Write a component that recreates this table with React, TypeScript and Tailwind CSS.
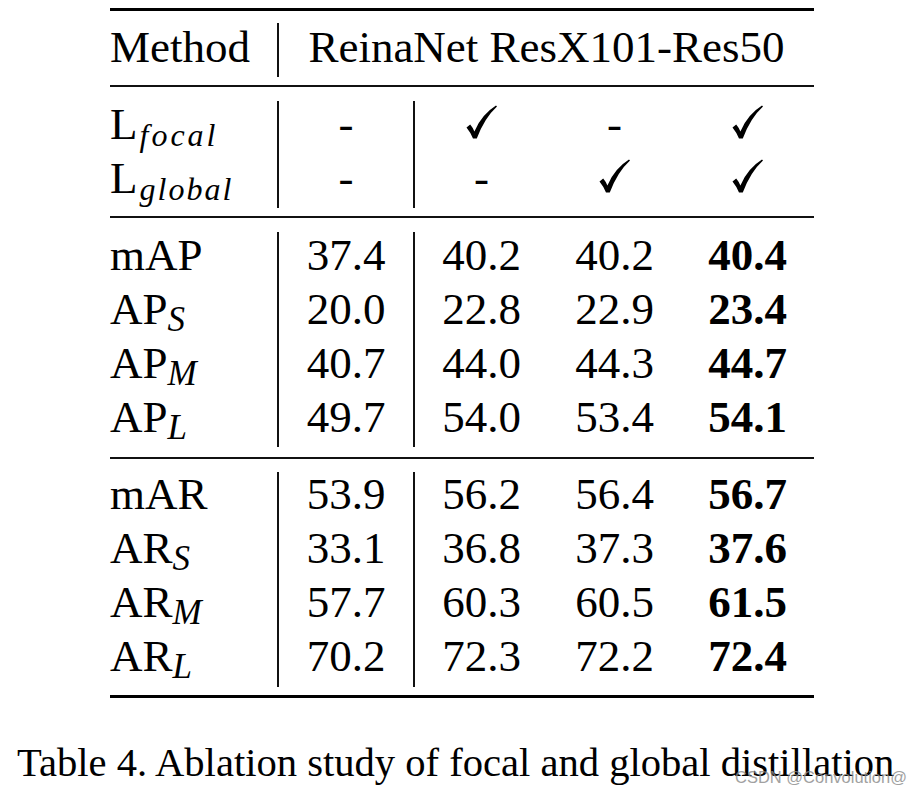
import React from 'react';

type Cell = React.ReactNode;

function Check() {
  return (
    <svg width="31" height="34" viewBox="0 0 31 34" className="inline-block align-baseline">
      <path
        d="M0.5 22.5 L4.2 19.6 Q6.6 22.4 8.4 26.4 Q15.5 9.5 30 0.5 L31 1.6 Q18.5 13 10.8 33.6 L7 33.6 Q4.4 27.2 0.5 22.5 Z"
        fill="#000"
      />
    </svg>
  );
}

function Sub({ children, className = '' }: { children: React.ReactNode; className?: string }) {
  return <span className={`relative top-[7px] italic ${className}`}>{children}</span>;
}

function Column({ cells, className, cellClass = 'text-center' }: { cells: Cell[]; className: string; cellClass?: string }) {
  return (
    <div className={className}>
      {cells.map((c, i) => (
        <div key={i} className={`h-[54px] leading-[54px] whitespace-nowrap ${cellClass}`}>
          {c}
        </div>
      ))}
    </div>
  );
}

interface SectionProps {
  labels: Cell[];
  cols: Cell[][];
  pad: string;
  bar: string;
  boldLast?: boolean;
}

function Section({ labels, cols, pad, bar, boldLast }: SectionProps) {
  return (
    <div className="flex">
      <Column cells={labels} className={`w-[167px] ${pad}`} cellClass="text-left" />
      <div className={`w-[2px] bg-[#111] ${bar}`} />
      <Column cells={cols[0]} className={`w-[134px] ${pad}`} />
      <div className={`w-[2px] bg-[#111] ${bar}`} />
      <Column cells={cols[1]} className={`w-[133px] ${pad}`} />
      <Column cells={cols[2]} className={`w-[133px] ${pad}`} />
      <Column cells={cols[3]} className={`w-[133px] ${pad}`} cellClass={boldLast ? 'text-center font-bold' : 'text-center'} />
    </div>
  );
}

const lossLabels: Cell[] = [
  <>L<Sub className="ml-[2px] text-[32px] tracking-[3px]">focal</Sub></>,
  <>L<Sub className="ml-[2px] text-[32px] tracking-[2px]">global</Sub></>,
];
const lossCols: Cell[][] = [
  ['-', '-'],
  [<Check />, '-'],
  ['-', <Check />],
  [<Check />, <Check />],
];

const apLabels: Cell[] = [
  'mAP',
  <>AP<Sub className="text-[35px]">S</Sub></>,
  <>AP<Sub className="text-[35px]">M</Sub></>,
  <>AP<Sub className="text-[35px]">L</Sub></>,
];
const apCols: Cell[][] = [
  ['37.4', '20.0', '40.7', '49.7'],
  ['40.2', '22.8', '44.0', '54.0'],
  ['40.2', '22.9', '44.3', '53.4'],
  ['40.4', '23.4', '44.7', '54.1'],
];

const arLabels: Cell[] = [
  'mAR',
  <>AR<Sub className="text-[35px]">S</Sub></>,
  <>AR<Sub className="text-[35px]">M</Sub></>,
  <>AR<Sub className="text-[35px]">L</Sub></>,
];
const arCols: Cell[][] = [
  ['53.9', '33.1', '57.7', '70.2'],
  ['56.2', '36.8', '60.3', '72.3'],
  ['56.4', '37.3', '60.5', '72.2'],
  ['56.7', '37.6', '61.5', '72.4'],
];

export default function App() {
  return (
    <div className="relative w-[923px] h-[793px] overflow-hidden bg-white text-black font-['Liberation_Serif',serif] text-[45px]">
      <div className="ml-[110px] w-[704px] pt-[8px]">
        {/* top rule */}
        <div className="h-[3px] bg-black" />

        {/* header */}
        <div className="flex">
          <div className="w-[167px] pt-[9px] pb-[11px] h-[74px]">
            <div className="h-[54px] leading-[54px]">Method</div>
          </div>
          <div className="w-[2px] bg-[#111] mt-[12px] mb-[8px]" />
          <div className="flex-1 pt-[9px] pb-[11px]">
            <div className="h-[54px] leading-[54px] text-center whitespace-nowrap">ReinaNet ResX101-Res50</div>
          </div>
        </div>
        <div className="h-[2px] bg-[#111]" />

        <Section labels={lossLabels} cols={lossCols} pad="pt-[10px] pb-[11px]" bar="mt-[14px] mb-[8px]" />
        <div className="h-[2px] bg-[#111]" />

        <Section labels={apLabels} cols={apCols} pad="pt-[10px] pb-[13px]" bar="mt-[14px] mb-[10px]" boldLast />
        <div className="h-[2px] bg-[#111]" />

        <Section labels={arLabels} cols={arCols} pad="pt-[8px] pb-[12px]" bar="mt-[13px] mb-[8px]" boldLast />
        {/* bottom rule */}
        <div className="h-[3px] bg-black" />
      </div>

      <div className="mt-[42px] pl-[17px] text-[40.6px] leading-[46px] whitespace-nowrap">
        Table 4. Ablation study of focal and global distillation
      </div>

      {/* watermark */}
      <div className="absolute left-[735px] top-[767px] font-['Liberation_Sans',sans-serif] text-[16.5px] leading-[20px] text-[#8a8a8a] opacity-80 whitespace-nowrap">
        CSDN @Convolution@
      </div>
    </div>
  );
}
